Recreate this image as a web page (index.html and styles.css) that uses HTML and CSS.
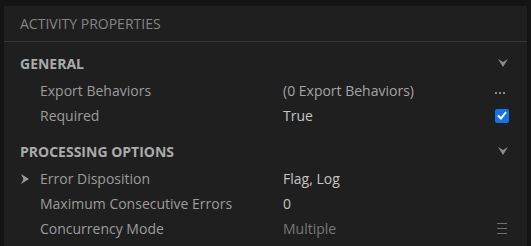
FILE: index.html
```html
<!DOCTYPE html>
<html lang="en">
<head>
    <meta charset="UTF-8">
    <title>Activity Properties</title>
    <link rel="stylesheet" href="styles.css">
</head>
<body>

<div class="panel">
    <div class="panel-title">ACTIVITY PROPERTIES</div>

    <div class="section">
        <div class="section-head">
            <span>GENERAL</span>
            <svg class="chev" width="10" height="8" viewBox="0 0 10 8"><path d="M0 0 L5 3 L10 0 L5 8 Z"/></svg>
        </div>
        <div class="row">
            <span class="arrow"></span>
            <span class="label">Export Behaviors</span>
            <span class="value">(0 Export Behaviors)</span>
            <svg class="more" width="10" height="3" viewBox="0 0 10 3"><rect x="0" y="0" width="2" height="2"/><rect x="4" y="0" width="2" height="2"/><rect x="8" y="0" width="2" height="2"/></svg>
        </div>
        <div class="row">
            <span class="arrow"></span>
            <span class="label">Required</span>
            <span class="value bright">True</span>
            <span class="check">
                <svg width="10" height="9" viewBox="0 0 10 9"><path d="M1 4.5 L4 7.5 L9 1" fill="none" stroke="#fff" stroke-width="2"/></svg>
            </span>
        </div>
    </div>

    <div class="section">
        <div class="section-head">
            <span>PROCESSING OPTIONS</span>
            <svg class="chev" width="10" height="8" viewBox="0 0 10 8"><path d="M0 0 L5 3 L10 0 L5 8 Z"/></svg>
        </div>
        <div class="row">
            <span class="arrow"><svg width="8" height="10" viewBox="0 0 8 10"><path d="M0 0 L8 5 L0 10 L2.5 5 Z"/></svg></span>
            <span class="label">Error Disposition</span>
            <span class="value bright">Flag, Log</span>
            <span></span>
        </div>
        <div class="row">
            <span class="arrow"></span>
            <span class="label">Maximum Consecutive Errors</span>
            <span class="value bright">0</span>
            <span></span>
        </div>
        <div class="row">
            <span class="arrow"></span>
            <span class="label">Concurrency Mode</span>
            <span class="value dim">Multiple</span>
            <svg class="menu" width="10" height="11" viewBox="0 0 10 11"><rect x="0" y="0" width="10" height="1"/><rect x="0" y="5" width="10" height="1"/><rect x="0" y="10" width="10" height="1"/></svg>
        </div>
    </div>
</div>

</body>
</html>
```

FILE: styles.css
```css
html, body, div, span {
    margin: 0;
    padding: 0;
}
body {
    background-color: #141414;
    font-family: "Open Sans", "Liberation Sans", sans-serif;
    font-size: 14px;
    color: #a0a0a0;
    overflow: hidden;
}
.panel {
    margin: 6px 4px 0 4px;
    width: 523px;
    height: 240px;
    background-color: #1f1f1f;
}
.panel-title {
    height: 35px;
    line-height: 35px;
    padding-left: 16px;
    color: #858585;
    border-bottom: 1px solid #363636;
}
.section {
    padding: 0 18px 0 16px;
}
.section-head {
    display: flex;
    justify-content: space-between;
    align-items: center;
    height: 30px;
    margin-top: 6px;
    font-weight: bold;
    color: #ababab;
}
.section + .section .section-head {
    margin-top: 8px;
}
.chev {
    fill: #8c8c8c;
    margin-right: 1px;
}
.row {
    display: grid;
    grid-template-columns: 20px 243px 1fr 14px;
    align-items: center;
    height: 25px;
}
.arrow {
    display: flex;
    align-items: center;
    padding-left: 1px;
}
.arrow svg {
    fill: #9a9a9a;
}
.label {
    color: #9c9c9c;
}
.value {
    color: #a4a4a4;
}
.value.bright {
    color: #c4c4c4;
}
.value.dim {
    color: #787878;
}
.more {
    fill: #8a8a8a;
    margin-top: 5px;
}
.check {
    width: 14px;
    height: 14px;
    border-radius: 2px;
    background-color: #1473e6;
    display: flex;
    align-items: center;
    justify-content: center;
}
.menu {
    fill: #6e6e6e;
    margin-left: 2px;
}
```
